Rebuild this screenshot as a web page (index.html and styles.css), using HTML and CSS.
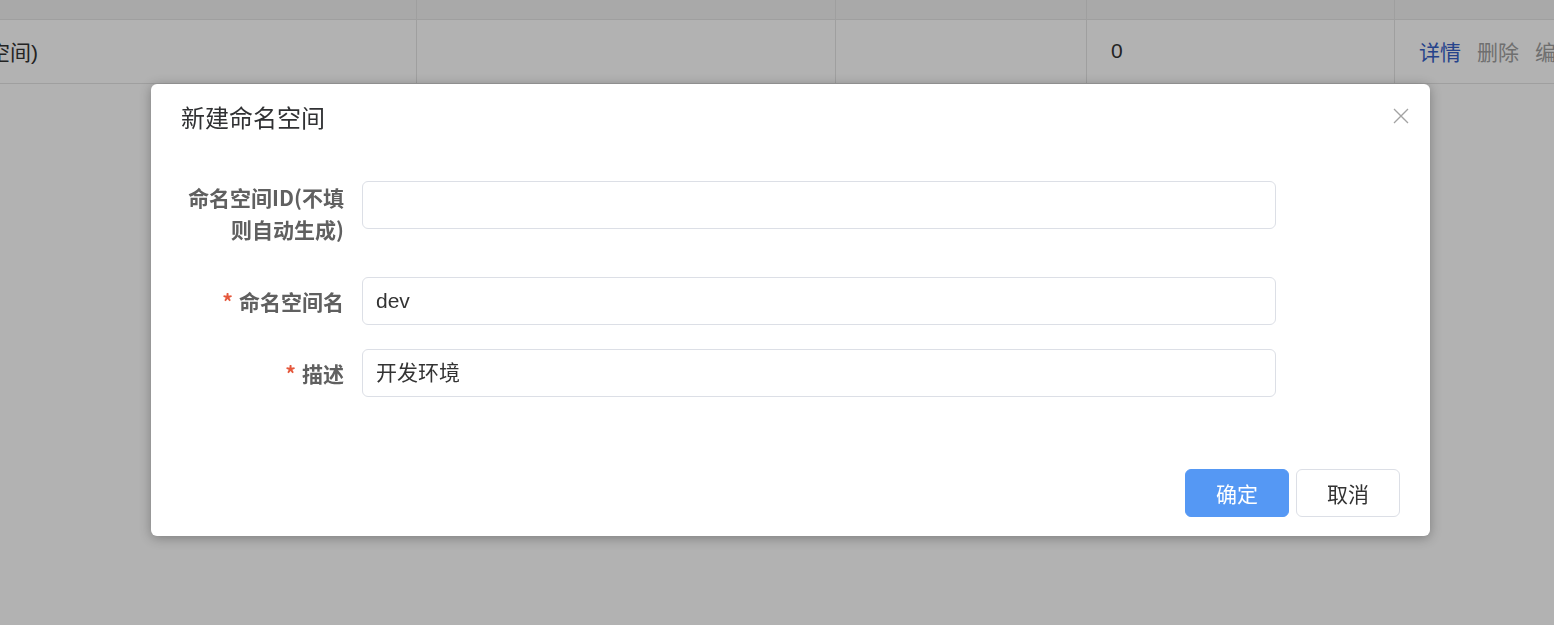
FILE: index.html
```html
<!DOCTYPE html>
<html lang="zh-CN">
<head>
<meta charset="utf-8">
<title>新建命名空间</title>
<link rel="stylesheet" href="styles.css">
</head>
<body>
<div class="table">
  <div class="row head">
    <div class="cell c1"></div>
    <div class="cell c2"></div>
    <div class="cell c3"></div>
    <div class="cell c4"></div>
    <div class="cell c5"></div>
  </div>
  <div class="row body-row">
    <div class="cell c1"><span class="clip">空间)</span></div>
    <div class="cell c2"></div>
    <div class="cell c3"></div>
    <div class="cell c4"><span class="pad">0</span></div>
    <div class="cell c5 ops"><a class="link primary">详情</a><a class="link">删除</a><a class="link">编辑</a></div>
  </div>
</div>

<div class="overlay"></div>

<div class="dialog">
  <div class="dialog-header">
    <span class="dialog-title">新建命名空间</span>
    <button class="close" aria-label="关闭">
      <svg width="16" height="16" viewBox="0 0 16 16"><path d="M1 1 L15 15 M15 1 L1 15" stroke="#a3a3a3" stroke-width="1.3" fill="none"/></svg>
    </button>
  </div>
  <div class="dialog-body">
    <div class="form-item">
      <label class="label multi">命名空间ID(不填则自动生成)</label>
      <div class="input"></div>
    </div>
    <div class="form-item">
      <label class="label"><span class="req">*</span>命名空间名</label>
      <div class="input">dev</div>
    </div>
    <div class="form-item">
      <label class="label"><span class="req">*</span>描述</label>
      <div class="input">开发环境</div>
    </div>
  </div>
  <div class="dialog-footer">
    <button class="btn btn-primary">确定</button>
    <button class="btn">取消</button>
  </div>
</div>
</body>
</html>
```

FILE: styles.css
```css
html, body {
  margin: 0;
  padding: 0;
  width: 1554px;
  height: 625px;
  overflow: hidden;
  background: #fff;
  font-family: "Liberation Sans", "Noto Sans CJK SC", sans-serif;
  color: #333;
}

.table {
  width: 1554px;
}

.row {
  display: flex;
  border-bottom: 1px solid #e4e4e4;
}

.row.head {
  height: 19px;
  background: #f3f3f3;
}

.row.body-row {
  height: 63px;
  font-size: 21px;
}

.cell {
  height: 100%;
  display: flex;
  align-items: center;
  padding-bottom: 2px;
  border-right: 1px solid #e4e4e4;
  box-sizing: border-box;
  overflow: hidden;
  white-space: nowrap;
}

.head .cell {
  padding-bottom: 0;
}

.c1 { width: 417px; }
.c2 { width: 419px; }
.c3 { width: 251px; }
.c4 { width: 308px; }
.c5 { flex: 1; border-right: none; }

.clip {
  margin-left: -11px;
  color: #333;
}

.pad {
  padding-left: 24px;
  color: #333;
}

.ops {
  padding-left: 24px;
  gap: 16px;
}

.link {
  color: #a0a0a0;
  font-family: "Noto Sans CJK SC", sans-serif;
}

.link.primary {
  color: #3660c8;
}

.overlay {
  position: fixed;
  inset: 0;
  background: rgba(0, 0, 0, 0.3);
}

.dialog {
  position: absolute;
  left: 151px;
  top: 84px;
  width: 1279px;
  background: #fff;
  border-radius: 6px;
  box-shadow: 0 2px 12px rgba(0, 0, 0, 0.3);
  box-sizing: border-box;
}

.dialog-header {
  position: relative;
  padding: 15px 30px 0;
  height: 52px;
  box-sizing: border-box;
}

.dialog-title {
  font-family: "Noto Sans CJK SC", sans-serif;
  font-size: 24px;
  line-height: 36px;
  color: #303133;
}

.close {
  position: absolute;
  right: 21px;
  top: 24px;
  width: 16px;
  height: 16px;
  padding: 0;
  border: none;
  background: none;
  display: flex;
}

.dialog-body {
  padding: 45px 0 0 31px;
}

.form-item {
  display: flex;
  margin-bottom: 24px;
}

.label {
  width: 180px;
  box-sizing: border-box;
  padding-right: 18px;
  text-align: right;
  font-family: "Noto Sans CJK SC", sans-serif;
  font-weight: bold;
  font-size: 21px;
  line-height: 48px;
  color: #606060;
}

.label.multi {
  line-height: 32px;
  padding-top: 0;
  padding-bottom: 8px;
}

.req {
  color: #e5583c;
  margin-right: 6px;
}

.input {
  width: 914px;
  height: 48px;
  box-sizing: border-box;
  border: 1px solid #dcdfe6;
  border-radius: 6px;
  padding-left: 13px;
  font-size: 21px;
  line-height: 46px;
  color: #333;
}

.dialog-footer {
  display: flex;
  justify-content: flex-end;
  gap: 7px;
  padding: 48px 30px 19px;
}

.btn {
  width: 104px;
  height: 48px;
  border: 1px solid #dcdfe6;
  border-radius: 6px;
  background: #fff;
  color: #333;
  font-family: "Noto Sans CJK SC", sans-serif;
  font-size: 21px;
  padding: 0;
}

.btn-primary {
  background: #5598f4;
  border-color: #5598f4;
  color: #fff;
}
```
